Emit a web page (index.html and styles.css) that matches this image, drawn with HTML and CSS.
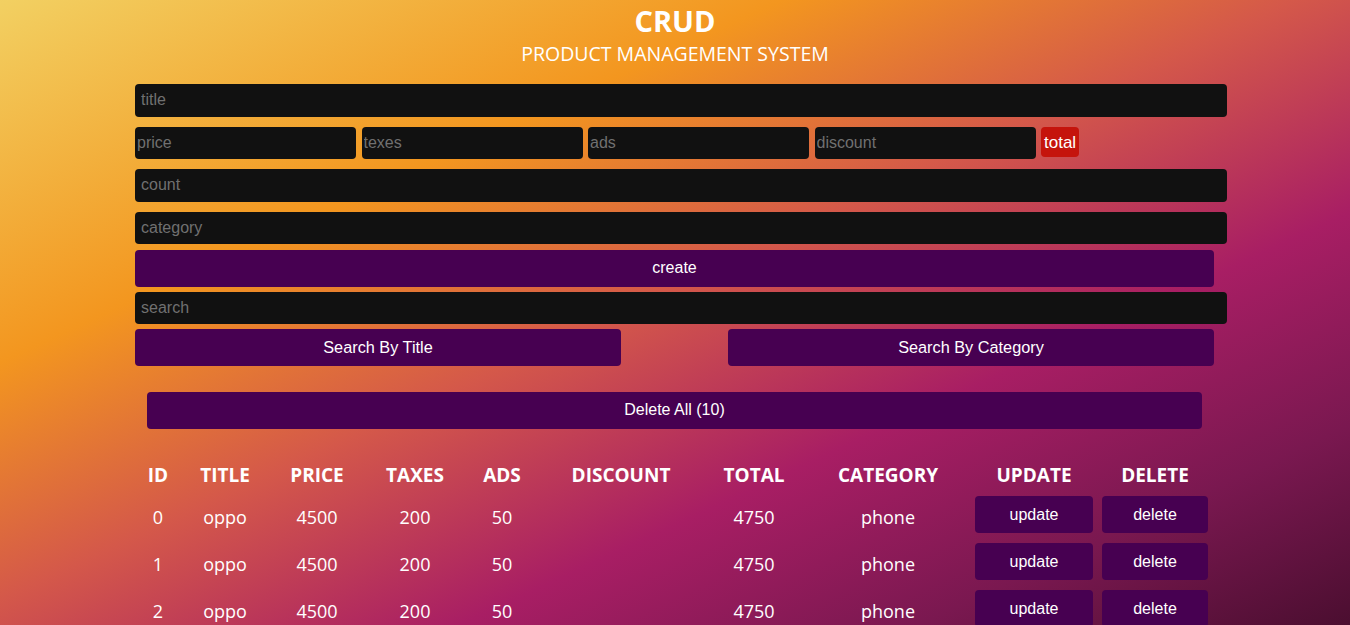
FILE: index.html
```html
<!DOCTYPE html>
<html lang="en">
<head>
<meta charset="UTF-8">
<title>CRUD</title>
<link rel="stylesheet" href="styles.css">
</head>
<body>
<div class="crud">
  <div class="head">
    <h2>CRUD</h2>
    <p>PRODUCT MANAGEMENT SYSTEM</p>
  </div>
  <div class="inputs">
    <input class="field wide" type="text" placeholder="title">
    <div class="price">
      <input class="field small" type="number" placeholder="price">
      <input class="field small" type="number" placeholder="texes">
      <input class="field small" type="number" placeholder="ads">
      <input class="field small" type="number" placeholder="discount">
      <small class="total">total</small>
    </div>
    <input class="field wide gap10" type="number" placeholder="count">
    <input class="field wide gap10 cat" type="text" placeholder="category">
    <button class="btn create">create</button>
  </div>
  <div class="output">
    <input class="field wide search" type="text" placeholder="search">
    <div class="btn-search">
      <button class="btn half">Search By Title</button>
      <button class="btn half">Search By Category</button>
    </div>
  </div>
  <div class="delete-all">
    <button class="btn">Delete All (10)</button>
  </div>
  <table class="products">
    <colgroup>
      <col class="c-id"><col class="c-title"><col class="c-price"><col class="c-taxes"><col class="c-ads"><col class="c-discount"><col class="c-total"><col class="c-category"><col class="c-update"><col class="c-delete">
    </colgroup>
    <thead>
      <tr><th>ID</th><th>TITLE</th><th>PRICE</th><th>TAXES</th><th>ADS</th><th>DISCOUNT</th><th>TOTAL</th><th>CATEGORY</th><th>UPDATE</th><th>DELETE</th></tr>
    </thead>
    <tbody>
      <tr><td>0</td><td>oppo</td><td>4500</td><td>200</td><td>50</td><td></td><td>4750</td><td>phone</td><td><button class="btn upd">update</button></td><td><button class="btn del">delete</button></td></tr>
      <tr><td>1</td><td>oppo</td><td>4500</td><td>200</td><td>50</td><td></td><td>4750</td><td>phone</td><td><button class="btn upd">update</button></td><td><button class="btn del">delete</button></td></tr>
      <tr><td>2</td><td>oppo</td><td>4500</td><td>200</td><td>50</td><td></td><td>4750</td><td>phone</td><td><button class="btn upd">update</button></td><td><button class="btn del">delete</button></td></tr>
      <tr><td>3</td><td>oppo</td><td>4500</td><td>200</td><td>50</td><td></td><td>4750</td><td>phone</td><td><button class="btn upd">update</button></td><td><button class="btn del">delete</button></td></tr>
      <tr><td>4</td><td>oppo</td><td>4500</td><td>200</td><td>50</td><td></td><td>4750</td><td>phone</td><td><button class="btn upd">update</button></td><td><button class="btn del">delete</button></td></tr>
      <tr><td>5</td><td>oppo</td><td>4500</td><td>200</td><td>50</td><td></td><td>4750</td><td>phone</td><td><button class="btn upd">update</button></td><td><button class="btn del">delete</button></td></tr>
      <tr><td>6</td><td>oppo</td><td>4500</td><td>200</td><td>50</td><td></td><td>4750</td><td>phone</td><td><button class="btn upd">update</button></td><td><button class="btn del">delete</button></td></tr>
      <tr><td>7</td><td>oppo</td><td>4500</td><td>200</td><td>50</td><td></td><td>4750</td><td>phone</td><td><button class="btn upd">update</button></td><td><button class="btn del">delete</button></td></tr>
      <tr><td>8</td><td>oppo</td><td>4500</td><td>200</td><td>50</td><td></td><td>4750</td><td>phone</td><td><button class="btn upd">update</button></td><td><button class="btn del">delete</button></td></tr>
      <tr><td>9</td><td>oppo</td><td>4500</td><td>200</td><td>50</td><td></td><td>4750</td><td>phone</td><td><button class="btn upd">update</button></td><td><button class="btn del">delete</button></td></tr>
    </tbody>
  </table>
</div>
</body>
</html>
```

FILE: styles.css
```css
* { box-sizing: border-box; }

html, body { margin: 0; padding: 0; }

body {
  min-height: 100vh;
  background: linear-gradient(to bottom right, #f2d062 0%, #f3961f 29%, #d4584a 48%, #a81e64 67%, #7a1850 84%, #4b0e30 100%);
  background-attachment: fixed;
  color: #fff;
  font-family: "Open Sans", "Noto Sans", sans-serif;
}

.crud {
  width: 1080px;
  margin: 0 auto;
}

.head {
  text-align: center;
  padding-top: 2px;
}

.head h2 {
  margin: 0;
  font-size: 29px;
  line-height: 38px;
  font-weight: 700;
}

.head p {
  margin: 0;
  font-size: 19.5px;
  line-height: 28px;
  font-weight: 400;
}

.inputs {
  display: flex;
  flex-direction: column;
  margin-top: 16px;
}

.field {
  display: block;
  border: none;
  outline: none;
  background: #111;
  color: #fff;
  border-radius: 4px;
  font-family: "Liberation Sans", Arial, sans-serif;
  font-size: 16px;
  -moz-appearance: textfield;
}

.field::placeholder { color: #707070; }

.field::-webkit-outer-spin-button,
.field::-webkit-inner-spin-button { -webkit-appearance: none; margin: 0; }

.wide {
  width: 1092px;
  height: 33px;
  padding: 0 6px 2px;
}

.cat { height: 32px; padding-bottom: 1px; }

.gap10 { margin-top: 10px; }

.price {
  display: flex;
  align-items: center;
  gap: 5.5px;
  margin-top: 10px;
  height: 32px;
}

.small {
  width: 221px;
  height: 32px;
  padding: 0 2px;
}

.total {
  display: inline-block;
  background: #c5140c;
  color: #fff;
  border-radius: 4px;
  font-family: "Liberation Sans", Arial, sans-serif;
  font-size: 17px;
  line-height: 30px;
  height: 30px;
  padding: 1px 3px 0;
  margin-top: -2px;
}

.btn {
  border: none;
  background: #470051;
  color: #fff;
  border-radius: 4px;
  font-family: "Liberation Sans", Arial, sans-serif;
  font-size: 16px;
  cursor: pointer;
  height: 37px;
  padding: 0 0 2px;
}

.create {
  width: 1079px;
  margin-top: 6px;
}

.output {
  display: flex;
  flex-direction: column;
}

.search {
  margin-top: 5px;
  height: 32px;
  padding-bottom: 1px;
}

.btn-search {
  display: flex;
  justify-content: space-between;
  width: 1079px;
  margin-top: 5px;
}

.half { width: 486px; font-size: 16.3px; padding-bottom: 0; }

.delete-all {
  padding: 0 13px 0 12px;
  margin-top: 26px;
}

.delete-all .btn { width: 1055px; }

.products {
  width: 1078px;
  table-layout: fixed;
  border-collapse: collapse;
  margin-top: 28px;
  text-align: center;
}

.c-id { width: 46px; }
.c-title { width: 88px; }
.c-price { width: 96px; }
.c-taxes { width: 100px; }
.c-ads { width: 74px; }
.c-discount { width: 164px; }
.c-total { width: 102px; }
.c-category { width: 166px; }
.c-update { width: 126px; }
.c-delete { width: 116px; }

.products th {
  font-size: 19px;
  font-weight: 700;
  height: 36px;
  padding: 0;
  line-height: 26px;
}

.products td {
  font-size: 18px;
  height: 47px;
  padding: 0;
  line-height: 24px;
}

.upd, .del {
  display: block;
  margin: 0 auto 4px;
  padding-bottom: 0;
}

.upd { width: 118px; }
.del { width: 106px; }
```
